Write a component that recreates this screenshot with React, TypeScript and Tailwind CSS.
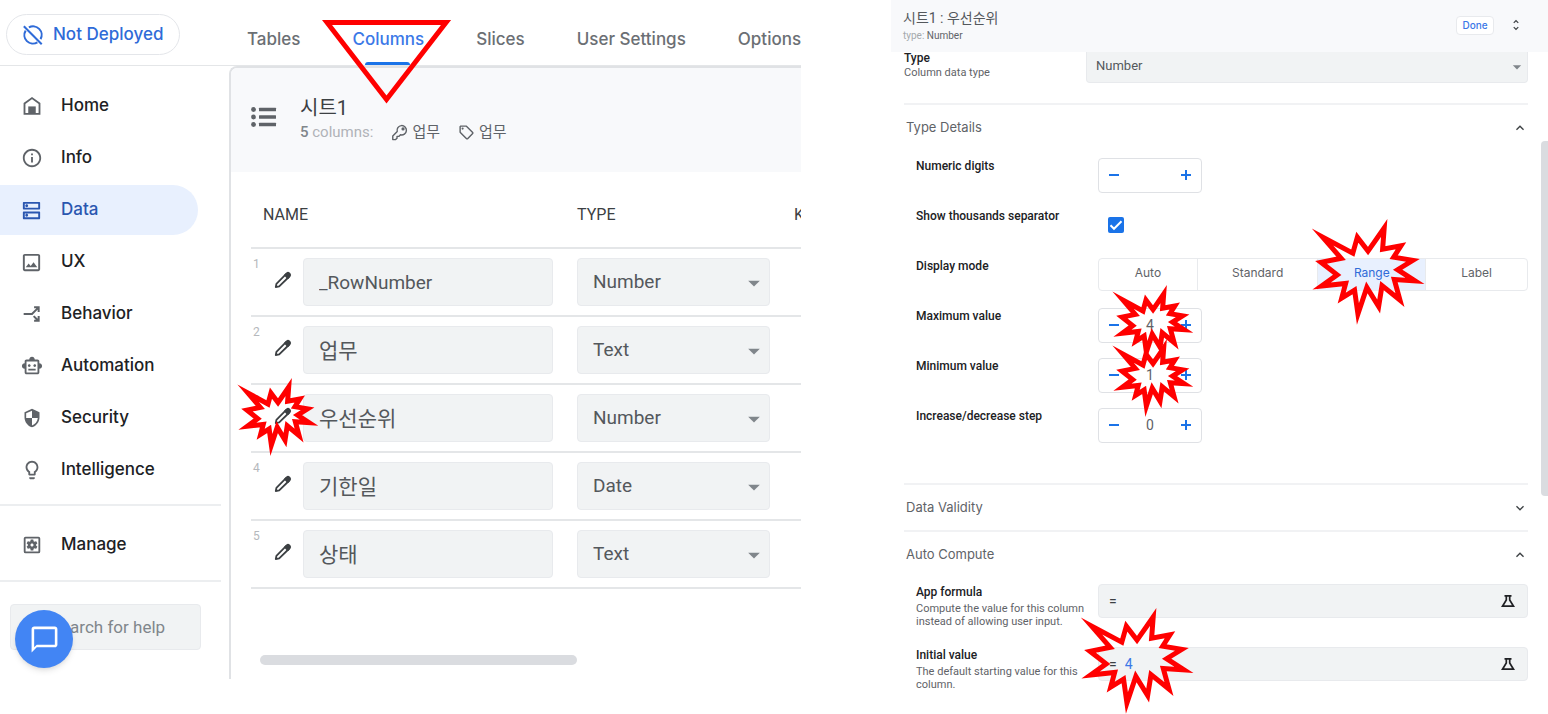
import { useState } from 'react';
import type { ReactNode } from 'react';
import {
  MdArrowDropDown,
  MdChatBubbleOutline,
  MdExpandLess,
  MdExpandMore,
  MdInfoOutline,
  MdOutlineDns,
  MdOutlineImage,
  MdOutlineLightbulb,
  MdOutlineSell,
  MdOutlineSettingsApplications,
  MdOutlineSmartToy,
  MdSecurity,
  MdUnfoldMore,
} from 'react-icons/md';

const SANS = "font-['Inter','Noto_Sans_CJK_KR',sans-serif]";
const ROBOTO = "font-['Roboto','Noto_Sans_CJK_KR',sans-serif]";

function HomeIcon() {
  return (
    <svg width="20" height="20" viewBox="0 0 24 24" fill="none" stroke="currentColor" strokeWidth="2.200">
      <path d="M3 21.500V9L12 2.500 21 9v12.500z" />
      <path d="M7.500 21.500V12.500h9v9z" fill="currentColor" stroke="none" />
    </svg>
  );
}

function BranchIcon() {
  return (
    <svg width="20" height="20" viewBox="0 0 24 24" fill="none" stroke="currentColor" strokeWidth="2.400">
      <path d="M2 12h10l7-7M14.500 4H20v5.500M14 14.500l5 5M14.500 20H20v-5.500" />
    </svg>
  );
}

function NotDeployedIcon() {
  return (
    <svg width="22" height="22" viewBox="0 0 24 24" fill="none" stroke="currentColor" strokeWidth="2.200">
      <path d="M7.500 3.800A9.300 9.300 0 0 1 20.200 16.500M16.800 20A9.300 9.300 0 0 1 4 7.200" />
      <path d="M2 2.500l19.500 19.500" />
    </svg>
  );
}

function ListIcon() {
  return (
    <svg width="26" height="20" viewBox="0 0 26 20" fill="currentColor">
      {[2.5, 10, 17.5].map((y) => (
        <g key={y}>
          <circle cx="2.500" cy={y} r="2.400" />
          <rect x="8" y={y - 1.7} width="17" height="3.400" rx=".5" />
        </g>
      ))}
    </svg>
  );
}

function PencilIcon() {
  return (
    <svg width="18" height="18" viewBox="0 0 18 18" fill="none" stroke="currentColor" strokeWidth="1.800" strokeLinejoin="round">
      <path d="M1.800 16l.6-3.200L12 3.200l2.800 2.800L5.200 15.400z" />
      <path d="M11 4.200l2-2q1-.8 2 0l.8.8q.8 1 0 2l-2 2z" fill="currentColor" />
    </svg>
  );
}

function KeyIcon() {
  return (
    <svg width="17" height="17" viewBox="0 0 24 24" fill="none" stroke="currentColor" strokeWidth="2" strokeLinejoin="round">
      <path d="M8.800 10.600A6.600 6.600 0 1 1 13.400 15.200L11 17.500H8.500V20L6.500 22H2.500V17z" />
      <circle cx="17" cy="7" r="1.300" fill="currentColor" />
    </svg>
  );
}

function FlaskIcon() {
  return (
    <svg width="14" height="14" viewBox="0 0 14 14" fill="none" stroke="currentColor" strokeWidth="1.700">
      <path d="M3.500 1.800h7M5.300 2v4L1.500 12.200h11L8.700 6V2" />
    </svg>
  );
}

function MinusIcon() {
  return (
    <svg width="10" height="10" viewBox="0 0 10 10" stroke="currentColor" strokeWidth="2">
      <path d="M0 5h10" />
    </svg>
  );
}

function PlusIcon() {
  return (
    <svg width="10" height="10" viewBox="0 0 10 10" stroke="currentColor" strokeWidth="2">
      <path d="M0 5h10M5 0v10" />
    </svg>
  );
}

const BURST =
  '10800,5800 14522,0 14155,5325 18380,4457 16702,7315 21097,8137 17607,10475 21600,13290 16837,12942 18145,18095 14020,14457 13247,19737 10532,14935 8485,21600 7715,15627 4762,17617 5667,13937 135,14587 3722,11775 0,8615 4627,7617 370,2295 7312,6320 8352,2295';

function Burst({ className }: { className: string }) {
  return (
    <svg
      className={`pointer-events-none absolute z-10 overflow-visible ${className}`}
      viewBox="0 0 21600 21600"
      preserveAspectRatio="none"
      fill="none"
      stroke="#ff0000"
      strokeWidth="5"
      strokeMiterlimit="10"
      aria-hidden="true"
    >
      <polygon points={BURST} vectorEffect="non-scaling-stroke" />
    </svg>
  );
}

const NAV = [
  { label: 'Home', icon: <HomeIcon /> },
  { label: 'Info', icon: <MdInfoOutline size={22} /> },
  { label: 'Data', icon: <MdOutlineDns size={23} /> },
  { label: 'UX', icon: <MdOutlineImage size={23} /> },
  { label: 'Behavior', icon: <BranchIcon /> },
  { label: 'Automation', icon: <MdOutlineSmartToy size={22} /> },
  { label: 'Security', icon: <MdSecurity size={20} /> },
  { label: 'Intelligence', icon: <MdOutlineLightbulb size={22} /> },
];

const TABS = ['Tables', 'Columns', 'Slices', 'User Settings', 'Options'];

const COLUMNS = [
  { name: '_RowNumber', type: 'Number', size: 'text-[19px]' },
  { name: '업무', type: 'Text', size: 'text-[21px] pb-[3px]' },
  { name: '우선순위', type: 'Number', size: 'text-[21px] pb-[3px]' },
  { name: '기한일', type: 'Date', size: 'text-[21px] pb-[3px]' },
  { name: '상태', type: 'Text', size: 'text-[21px] pb-[3px]' },
];

const TYPES = ['Number', 'Text', 'Date'];

function NavItem({ label, icon, active }: { label: string; icon: ReactNode; active?: boolean }) {
  return (
    <a
      href="#"
      className={`flex h-[50px] w-[198px] items-center rounded-r-full pl-5 text-[17px] font-medium ${
        active ? 'bg-[#e8f0fe] text-[#2a56b0]' : 'text-[#202124]'
      }`}
    >
      <span className={`flex w-[41px] shrink-0 ${active ? 'text-[#2a56b0]' : 'text-[#5f6368]'}`}>
        <span className="flex w-[23px] justify-center">{icon}</span>
      </span>
      {label}
    </a>
  );
}

function Sidebar() {
  return (
    <aside className={`w-[229px] shrink-0 pt-[15px] ${SANS}`}>
      <nav className="flex flex-col gap-[2px]">
        {NAV.map((item) => (
          <NavItem key={item.label} {...item} active={item.label === 'Data'} />
        ))}
      </nav>
      <div className="mr-2 mt-[9px] border-y-2 border-[#eceef0] pb-[10px] pt-[14px]">
        <NavItem label="Manage" icon={<MdOutlineSettingsApplications size={22} />} />
      </div>
      <div className="relative ml-[10px] mt-[22px] w-[191px]">
        <input
          type="search"
          aria-label="Search for help"
          placeholder="Search for help"
          className={`h-[46px] w-full rounded border border-[#e8eaed] bg-[#f1f3f4] pl-10 text-[17px] placeholder:text-[#80868b] ${ROBOTO}`}
        />
        <button
          type="button"
          aria-label="Open chat"
          className="absolute left-[5px] top-[6px] flex size-[58px] items-center justify-center rounded-full bg-[#4285f4] text-white shadow-md"
        >
          <MdChatBubbleOutline size={31} />
        </button>
      </div>
    </aside>
  );
}

function ColumnsTable() {
  return (
    <table className={`ml-5 w-[700px] table-fixed border-collapse text-left ${ROBOTO}`}>
      <thead>
        <tr className="h-[76px] border-b-2 border-[#e4e6e8] text-[16px] text-[#3c4043]">
          <th className="w-[326px] pl-3 pt-[10px] font-normal">NAME</th>
          <th className="w-[217px] pt-[10px] font-normal">TYPE</th>
          <th className="pt-[10px] font-normal">K</th>
        </tr>
      </thead>
      <tbody>
        {COLUMNS.map((col, i) => (
          <tr key={col.name} className="h-[68px] border-b-2 border-[#e4e6e8] text-[19px] text-[#54585c]">
            <td>
              <div className="flex items-center">
                <span className="w-[23px] self-start pl-[2px] text-[12px] leading-none text-[#b5b8bc]">{i + 1}</span>
                <button type="button" aria-label={`Edit ${col.name}`} className="relative mr-[11px] flex w-[18px] pb-1 text-[#3c4043]">
                  <PencilIcon />
                  {i === 2 && <Burst className="-left-[27px] -top-5 h-[58px] w-[62px]" />}
                </button>
                <input
                  aria-label={`Name of column ${i + 1}`}
                  defaultValue={col.name}
                  className={`h-12 w-[250px] rounded border border-[#e8eaed] bg-[#f1f3f4] px-[15px] ${col.size}`}
                />
              </div>
            </td>
            <td>
              <div className="relative w-[193px]">
                <select
                  aria-label={`Type of ${col.name}`}
                  defaultValue={col.type}
                  className="h-12 w-full appearance-none rounded border border-[#e8eaed] bg-[#f1f3f4] px-[15px]"
                >
                  {TYPES.map((t) => (
                    <option key={t}>{t}</option>
                  ))}
                </select>
                <MdArrowDropDown size={28} className="pointer-events-none absolute right-[2px] top-[11px] text-[#80868b]" />
              </div>
            </td>
            <td />
          </tr>
        ))}
      </tbody>
    </table>
  );
}

function Editor() {
  return (
    <section className="flex min-w-0 flex-col overflow-hidden">
      <header className={`flex h-[66px] shrink-0 items-center border-b border-[#e4e6e8] pl-[6px] font-medium ${SANS}`}>
        <button
          type="button"
          className="mt-1 flex h-[41px] w-[174px] shrink-0 items-center gap-[9px] rounded-full border border-[#e4e6ea] pl-[15px] text-[17px] text-[#2f6bd8]"
        >
          <NotDeployedIcon />
          <span className="whitespace-nowrap">Not Deployed</span>
        </button>
        <nav className="ml-[67px] flex h-full gap-[52px] text-[17px] text-[#6b6f74]">
          {TABS.map((tab) => (
            <a
              key={tab}
              href="#"
              className={`relative flex h-full items-center whitespace-nowrap pt-[14px] ${tab === 'Columns' ? 'text-[#3b78e7]' : ''}`}
            >
              {tab}
              {tab === 'Columns' && (
                <>
                  <span className="absolute bottom-0 left-[13px] right-[14px] h-[3px] rounded-t bg-[#1a73e8]" />
                  <svg
                    className="pointer-events-none absolute -left-[30px] top-5 z-10"
                    width="130"
                    height="84"
                    fill="none"
                    stroke="#ff0000"
                    strokeWidth="5"
                    aria-hidden="true"
                  >
                    <polygon points="5,2.500 124,2.500 64.500,79.500" />
                  </svg>
                </>
              )}
            </a>
          ))}
        </nav>
      </header>
      <div className="flex">
        <Sidebar />
        <main className="h-[613px] min-w-0 flex-1 overflow-hidden rounded-tl-lg border-l-2 border-t-2 border-[#e0e2e5]">
          <div className={`flex h-[104px] bg-[#f8f9fb] pl-5 pt-[28px] text-[#5f6368] ${ROBOTO}`}>
            <div className="mt-[11px]">
              <ListIcon />
            </div>
            <div className="ml-[23px]">
              <h1 className="text-[20px] leading-6 text-[#3c4043]">시트1</h1>
              <div className="flex items-center text-[15px] leading-6">
                <span className="text-[#b0b3b8]">
                  <b className="font-medium text-[#80868b]">5</b> columns:
                </span>
                <span className="ml-[18px] flex items-center gap-1">
                  <KeyIcon /> 업무
                </span>
                <span className="ml-[18px] flex items-center gap-1">
                  <MdOutlineSell size={17} /> 업무
                </span>
              </div>
            </div>
          </div>
          <ColumnsTable />
          <div className="ml-[29px] mt-[66px] h-[10px] w-[317px] rounded-full bg-[#dadce0]" />
        </main>
      </div>
    </section>
  );
}

function Stepper({ id, value, children }: { id: string; value: string; children?: ReactNode }) {
  return (
    <div className="relative flex h-[35px] w-[104px] items-center justify-between rounded border border-[#dfe1e5] px-[10px] pb-[1px] text-[#1a73e8]">
      <button type="button" aria-label="Decrease">
        <MinusIcon />
      </button>
      <input id={id} defaultValue={value} className="w-10 text-center text-[14px] text-[#5f6368]" />
      <button type="button" aria-label="Increase">
        <PlusIcon />
      </button>
      {children}
    </div>
  );
}

function Setting({ id, label, hint, children }: { id: string; label: string; hint?: string; children: ReactNode }) {
  return (
    <div className={`flex pl-[12px] ${hint ? 'h-[63px]' : 'h-[50px]'}`}>
      <div className="w-[182px] shrink-0">
        <label htmlFor={id} className="block text-[12px] font-medium leading-4 text-[#202124]">
          {label}
        </label>
        {hint && <p className="mt-[2px] w-[170px] text-[11px] leading-[13px] text-[#5f6368]">{hint}</p>}
      </div>
      <div className="min-w-0 flex-1">{children}</div>
    </div>
  );
}

function SectionHeader({ title, open }: { title: string; open?: boolean }) {
  return (
    <button
      type="button"
      aria-expanded={!!open}
      className={`flex h-[47px] w-full items-center justify-between border-t-2 border-[#f1f2f4] pl-[2px] text-[13px] text-[#5f6368] ${SANS}`}
    >
      {title}
      {open ? <MdExpandLess size={16} className="text-[#3c4043]" /> : <MdExpandMore size={16} className="text-[#3c4043]" />}
    </button>
  );
}

function FormulaField({ id, value, children }: { id: string; value: string; children?: ReactNode }) {
  return (
    <div className="relative flex h-[34px] items-center gap-2 rounded border border-[#e8eaed] bg-[#f1f3f4] pl-[10px] pr-3 text-[14px]">
      <span className="text-[#3c4043]">=</span>
      <input id={id} defaultValue={value} className="min-w-0 flex-1 text-[#3b78e7]" />
      <button type="button" aria-label="Test expression" className="text-[#202124]">
        <FlaskIcon />
      </button>
      {children}
    </div>
  );
}

const MODES = [
  { label: 'Auto', grow: 'grow-[99]' },
  { label: 'Standard', grow: 'grow-[121]' },
  { label: 'Range', grow: 'grow-[108]' },
  { label: 'Label', grow: 'grow-[102]' },
];

function DisplayMode() {
  const [mode, setMode] = useState('Range');
  return (
    <div id="display-mode" role="group" aria-label="Display mode" className={`flex h-[33px] divide-x divide-[#e8eaed] rounded border border-[#e8eaed] text-[12px] ${SANS}`}>
      {MODES.map(({ label, grow }) => (
        <button
          key={label}
          type="button"
          onClick={() => setMode(label)}
          className={`relative basis-0 pb-[3px] ${grow} ${mode === label ? 'bg-[#e8f0fe] text-[#2f6bd8]' : 'text-[#5f6368]'}`}
        >
          {label}
          {label === 'Range' && <Burst className="left-[3px] -top-[31px] h-[86px] w-[94px]" />}
        </button>
      ))}
    </div>
  );
}

function ColumnPanel() {
  return (
    <section className={`relative h-[689px] min-w-0 overflow-visible ${ROBOTO}`}>
      <header className="flex h-[52px] items-center bg-[#f8f9fb] pl-[12px] pr-[25px]">
        <div className="flex-1">
          <h2 className="text-[14px] leading-5 text-[#54585c]">시트1 : 우선순위</h2>
          <p className="text-[10px] leading-4 text-[#a5a9ad]">
            type: <span className="text-[#5f6368]">Number</span>
          </p>
        </div>
        <button type="button" className={`mb-[2px] mr-[15px] h-[19px] w-[38px] rounded border border-[#e8eaed] bg-white text-[10px] font-medium leading-none text-[#3b78e7] ${SANS}`}>
          Done
        </button>
        <button type="button" aria-label="Expand panel" className="mb-[2px] text-[#3c4043]">
          <MdUnfoldMore size={14} />
        </button>
      </header>
      <div className="pl-[13px] pr-[20px]">
        <div className="flex h-[51px]">
          <div className="w-[182px] shrink-0">
            <label htmlFor="column-type" className="block text-[12px] font-medium leading-[12px] text-[#202124]">
              Type
            </label>
            <p className="mt-[2px] text-[11px] leading-[13px] text-[#5f6368]">Column data type</p>
          </div>
          <div className="relative h-[31px] flex-1">
            <select
              id="column-type"
              defaultValue="Number"
              className="h-full w-full appearance-none rounded-b border border-t-0 border-[#e8eaed] bg-[#f1f3f4] px-[9px] pb-[2px] text-[13px] text-[#54585c]"
            >
              {TYPES.map((t) => (
                <option key={t}>{t}</option>
              ))}
            </select>
            <MdArrowDropDown size={20} className="pointer-events-none absolute right-[1px] top-[5px] text-[#80868b]" />
          </div>
        </div>
        <SectionHeader title="Type Details" open />
        <div className="h-[333px] pt-[8px]">
          <Setting id="digits" label="Numeric digits">
            <Stepper id="digits" value="" />
          </Setting>
          <Setting id="thousands" label="Show thousands separator">
            <div className="relative ml-[10px] mt-[9px] size-4">
              <input id="thousands" type="checkbox" defaultChecked className="block size-4 appearance-none rounded-[2px] bg-[#1a73e8]" />
              <svg className="pointer-events-none absolute inset-0" width="16" height="16" fill="none" stroke="#fff" strokeWidth="2">
                <path d="M2.500 8.300l3.500 3.500 7.500-7.500" />
              </svg>
            </div>
          </Setting>
          <Setting id="display-mode" label="Display mode">
            <DisplayMode />
          </Setting>
          <Setting id="max" label="Maximum value">
            <Stepper id="max" value="4">
              <Burst className="left-[23px] -top-[15px] h-[58px] w-[62px]" />
            </Stepper>
          </Setting>
          <Setting id="min" label="Minimum value">
            <Stepper id="min" value="1">
              <Burst className="left-[23px] -top-[11px] h-[58px] w-[62px]" />
            </Stepper>
          </Setting>
          <Setting id="step" label="Increase/decrease step">
            <Stepper id="step" value="0" />
          </Setting>
        </div>
        <SectionHeader title="Data Validity" />
        <SectionHeader title="Auto Compute" open />
        <div className="pt-[7px]">
          <Setting id="formula" label="App formula" hint="Compute the value for this column instead of allowing user input.">
            <FormulaField id="formula" value="" />
          </Setting>
          <Setting id="initial" label="Initial value" hint="The default starting value for this column.">
            <FormulaField id="initial" value="4">
              <Burst className="-left-[9px] -top-[31px] h-[86px] w-[94px]" />
            </FormulaField>
          </Setting>
        </div>
      </div>
      <div className="absolute right-0 top-[141px] h-[355px] w-[7px] rounded-l bg-[#dadce0]" />
    </section>
  );
}

export default function App() {
  return (
    <div className="grid min-h-screen grid-cols-[801fr_657fr] items-start gap-[90px] overflow-hidden bg-white">
      <Editor />
      <ColumnPanel />
    </div>
  );
}
